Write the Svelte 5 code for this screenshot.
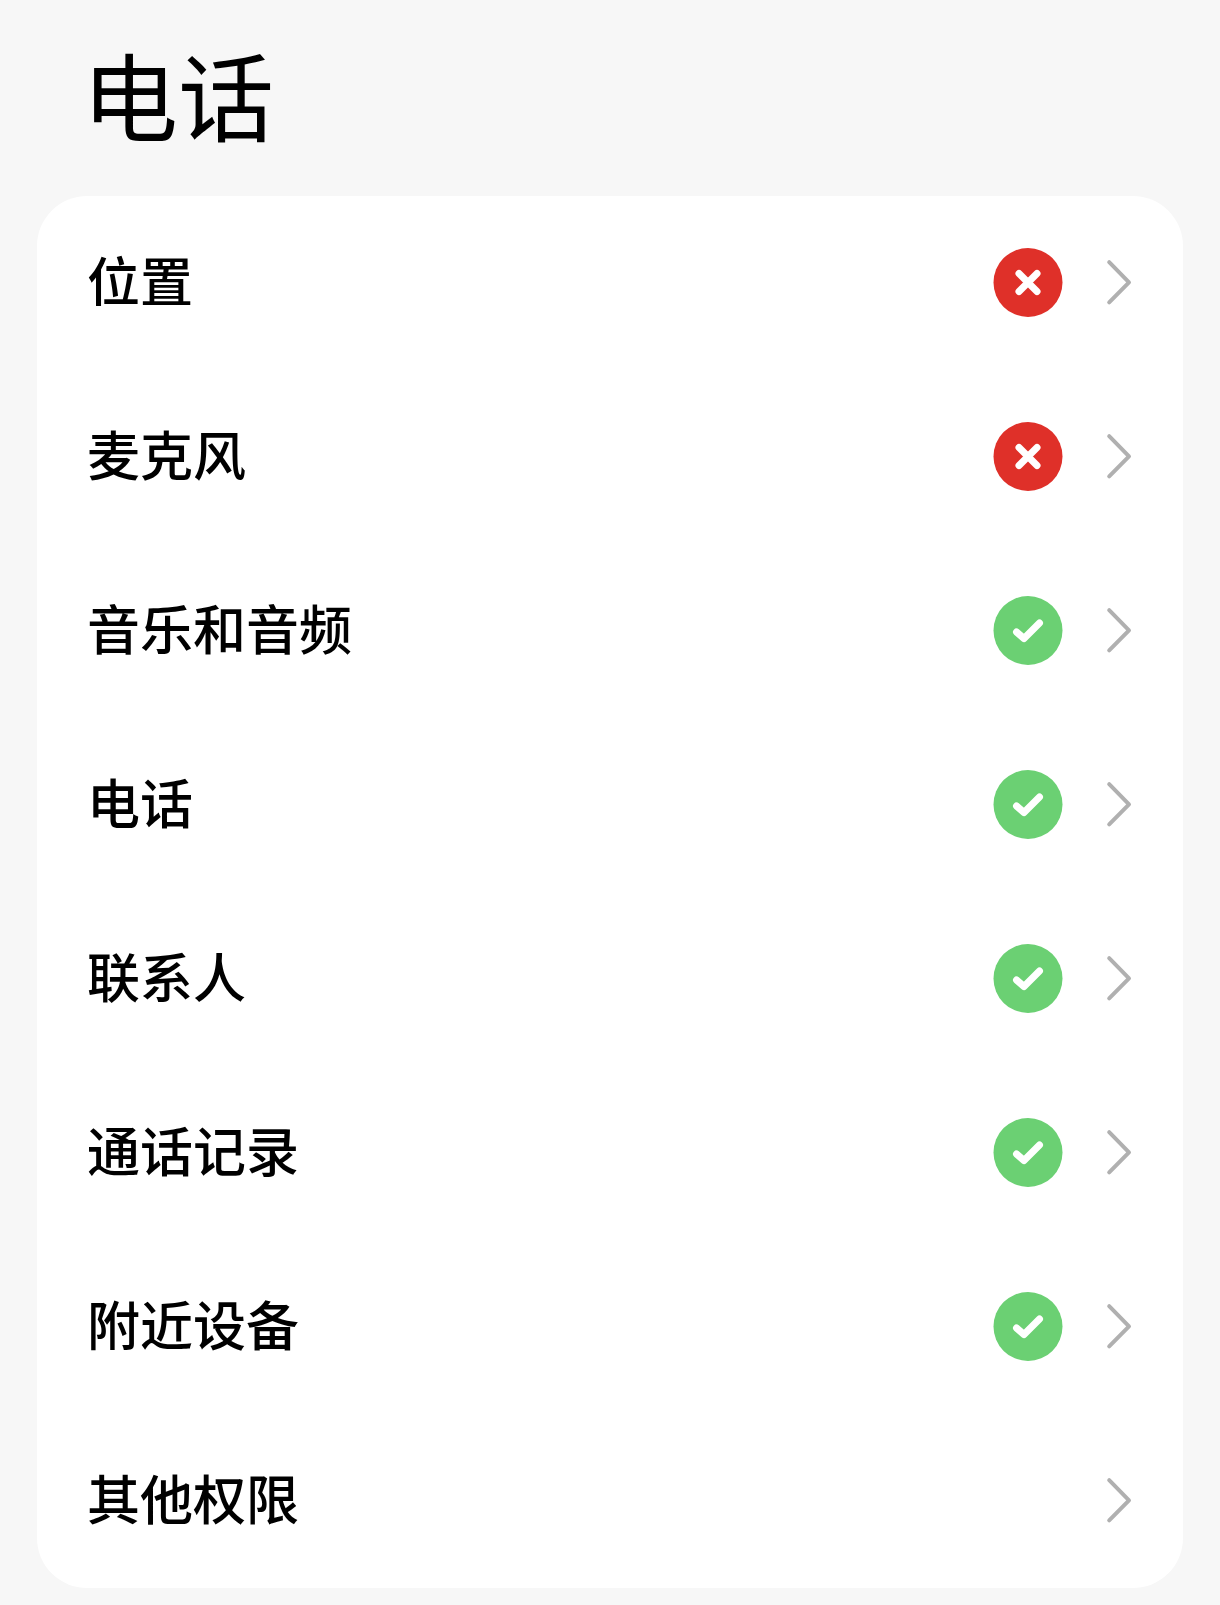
<script>
  const permissions = [
    { id: 'location', name: '位置', status: 'denied' },
    { id: 'microphone', name: '麦克风', status: 'denied' },
    { id: 'audio', name: '音乐和音频', status: 'allowed' },
    { id: 'phone', name: '电话', status: 'allowed' },
    { id: 'contacts', name: '联系人', status: 'allowed' },
    { id: 'call-log', name: '通话记录', status: 'allowed' },
    { id: 'nearby', name: '附近设备', status: 'allowed' },
    { id: 'other', name: '其他权限', status: null }
  ];
</script>

<main class="page">
  <h1>电话</h1>

  <ul class="card">
    {#each permissions as permission (permission.id)}
      <li>
        <a class="row" href="#{permission.id}">
          <span class="name">{permission.name}</span>

          {#if permission.status === 'denied'}
            <svg class="status denied" viewBox="0 0 70 70" aria-hidden="true">
              <circle cx="35" cy="34.5" r="34.5" />
              <path d="M26 25.5L44 43.5M44 25.5L26 43.5" />
            </svg>
          {:else if permission.status === 'allowed'}
            <svg class="status allowed" viewBox="0 0 70 70" aria-hidden="true">
              <circle cx="35" cy="34.5" r="34.5" />
              <path d="M23.5 36L31 42.5L46.5 27" />
            </svg>
          {/if}

          <svg class="chevron" viewBox="0 0 24 44" aria-hidden="true">
            <path d="M2.2 1.2L22 21.3L2.2 41.4" />
          </svg>
        </a>
      </li>
    {/each}
  </ul>
</main>

<style>
  :global(body) {
    background: #f7f7f7;
  }

  .page {
    padding: 23px 37px 17px;
    font-family: 'Noto Sans CJK SC', sans-serif;
    color: #000;
  }

  h1 {
    margin: 0;
    padding: 0 45px 33px;
    font-size: 96px;
    font-weight: 400;
    line-height: 140px;
  }

  .card {
    margin: 0;
    padding: 0;
    list-style: none;
    background: #fff;
    border-radius: 50px;
    overflow: hidden;
  }

  .row {
    display: flex;
    align-items: center;
    height: 174px;
    padding: 0 52px 0 50px;
    box-sizing: border-box;
    color: inherit;
    text-decoration: none;
  }

  .name {
    flex: 1;
    padding-bottom: 8px;
    font-size: 53px;
    font-weight: 500;
    line-height: 80px;
  }

  .status {
    width: 70px;
    height: 70px;
    margin-right: 44px;
  }

  .status path {
    fill: none;
    stroke: #fff;
    stroke-width: 7;
    stroke-linecap: round;
    stroke-linejoin: round;
  }

  .denied circle {
    fill: #df3029;
  }

  .allowed circle {
    fill: #6bd073;
  }

  .chevron {
    width: 24px;
    height: 44px;
    overflow: visible;
  }

  .chevron path {
    fill: none;
    stroke: #b0b0b0;
    stroke-width: 4;
    stroke-linecap: round;
    stroke-linejoin: round;
  }
</style>
